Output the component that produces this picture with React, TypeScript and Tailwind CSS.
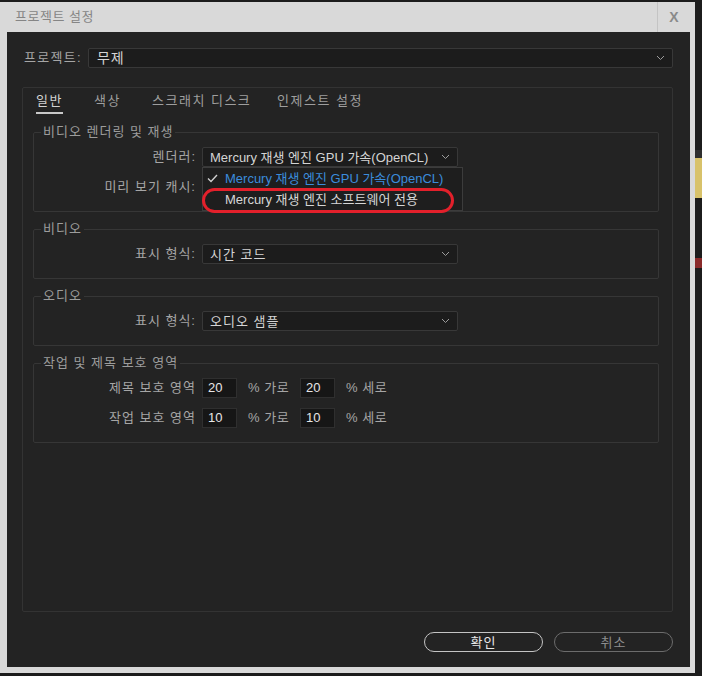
import React from "react";

const font = "font-['Liberation_Sans','Noto_Sans_CJK_KR',sans-serif]";

function Chevron() {
  return (
    <svg width="9" height="6" viewBox="0 0 9 6" className="shrink-0">
      <polyline points="1,1 4.5,4.5 8,1" fill="none" stroke="#9c9c9c" strokeWidth="1" />
    </svg>
  );
}

function Select({ value, ko, className = "" }: { value: string; ko?: boolean; className?: string }) {
  return (
    <div
      className={`flex items-center justify-between h-[20px] bg-[#1c1c1c] border border-[#383838] rounded-[2px] pl-[7px] pr-[7px] text-[13px] text-[#d4d4d4] ${className}`}
    >
      <span className={`leading-none whitespace-nowrap ${ko ? "tracking-[1px]" : ""}`}>{value}</span>
      <Chevron />
    </div>
  );
}

function Group({ title, first, children }: { title: string; first?: boolean; children: React.ReactNode }) {
  return (
    <fieldset
      className={`${first ? "mt-[9px]" : "mt-[8px]"} ml-[10px] mr-[13px] border border-[#363636] rounded-[2px] pb-[14px]`}
    >
      <legend className="ml-[7px] px-[2px] h-[18px] leading-[18px] text-[13px] tracking-[1px] text-[#9c9c9c]">{title}</legend>
      <div className="pt-[6px] flex flex-col gap-[10px]">{children}</div>
    </fieldset>
  );
}

function Row({ label, children }: { label: string; children: React.ReactNode }) {
  return (
    <div className="flex items-center h-[20px]">
      <div className="w-[162px] mr-[6px] text-right text-[13px] tracking-[1px] text-[#a6a6a6] whitespace-nowrap">{label}</div>
      {children}
    </div>
  );
}

function Num({ v }: { v: string }) {
  return (
    <div className="w-[35px] h-[20px] bg-[#161616] border border-[#2f2f2f] pl-[5px] flex items-center text-[13px] text-[#e6e6e6]">
      {v}
    </div>
  );
}

function SafeRow({ label, h, v }: { label: string; h: string; v: string }) {
  return (
    <Row label={label}>
      <Num v={h} />
      <span className="ml-[11px] mr-[12px] w-[40px] text-[13px] tracking-[0.5px] text-[#a6a6a6] whitespace-nowrap">% 가로</span>
      <Num v={v} />
      <span className="ml-[11px] text-[13px] tracking-[0.5px] text-[#a6a6a6] whitespace-nowrap">% 세로</span>
    </Row>
  );
}

const tabs = [
  { label: "일반", w: "w-[58px]" },
  { label: "색상", w: "w-[58px]" },
  { label: "스크래치 디스크", w: "w-[125px]" },
  { label: "인제스트 설정", w: "w-[100px]" },
];

export default function App() {
  return (
    <div className={`w-[702px] h-[676px] bg-[#1c1c1c] flex ${font} overflow-hidden`}>
      <div className="pt-[2px]">
        <div className="w-[695px] h-[671px] bg-[#d9d9d9] flex flex-col">
          {/* title bar */}
          <div className="h-[30px] flex items-center">
            <div className="flex-1 pl-[15px] text-[13px] tracking-[0.5px] text-[#858585]">프로젝트 설정</div>
            <div className="w-[33px] h-full border-l border-[#c4c4c4] mr-[5px] flex items-center justify-center text-[14px] font-bold text-[#8a8a8a]">
              X
            </div>
          </div>

          {/* body */}
          <div className="ml-[7px] mr-[5px] h-[635px] bg-[#232323] pl-[15px] pr-[17px] pt-[16px] flex flex-col">
            <div className="flex items-center pl-[2px] h-[19px]">
              <span className="text-[13px] tracking-[1.3px] text-[#a6a6a6] mr-[6px] whitespace-nowrap">프로젝트:</span>
              <Select value="무제" ko className="flex-1 h-[19px] pl-[8px] text-[14px]" />
            </div>

            <div className="mt-[20px] h-[525px] border border-[#333333] rounded-[2px] flex flex-col">
              <div className="flex pl-[13px] pt-[4px]">
                {tabs.map((t, i) => (
                  <div key={t.label} className={`${t.w} h-[22px] flex`}>
                    <span
                      className={`leading-[18px] text-[13px] tracking-[1.5px] whitespace-nowrap ${
                        i === 0 ? "text-[#d2d2d2] border-b-2 border-[#c8c8c8]" : "text-[#9e9e9e]"
                      }`}
                    >
                      {t.label}
                    </span>
                  </div>
                ))}
              </div>

              <Group title="비디오 렌더링 및 재생" first>
                <Row label="렌더러:">
                  <div className="relative">
                    <Select value="Mercury 재생 엔진 GPU 가속(OpenCL)" className="w-[256px]" />
                    <div className="absolute left-0 top-full w-[261px] bg-[#1e1e1e] border border-[#3c3c3c] z-10 text-[13px]">
                      <div className="h-[21px] flex items-center pl-[4px]">
                        <svg width="11" height="9" viewBox="0 0 11 9" className="mr-[7px]">
                          <polyline points="1,4.5 4,7.5 10,1" fill="none" stroke="#d0d0d0" strokeWidth="1.4" />
                        </svg>
                        <span className="text-[#3b8cdc] whitespace-nowrap">Mercury 재생 엔진 GPU 가속(OpenCL)</span>
                      </div>
                      <div className="h-[21px] flex items-center pl-[22px] text-[#d6d6d6] whitespace-nowrap">
                        Mercury 재생 엔진 소프트웨어 전용
                      </div>
                      <div className="absolute left-[-1px] top-[20px] w-[252px] h-[25px] border-[3px] border-[#e3202b] rounded-[14px]" />
                    </div>
                  </div>
                </Row>
                <Row label="미리 보기 캐시:">
                  <Select value="" className="w-[256px]" />
                </Row>
              </Group>

              <Group title="비디오">
                <Row label="표시 형식:">
                  <Select value="시간 코드" ko className="w-[256px]" />
                </Row>
              </Group>

              <Group title="오디오">
                <Row label="표시 형식:">
                  <Select value="오디오 샘플" ko className="w-[256px]" />
                </Row>
              </Group>

              <Group title="작업 및 제목 보호 영역">
                <SafeRow label="제목 보호 영역" h="20" v="20" />
                <SafeRow label="작업 보호 영역" h="10" v="10" />
              </Group>
            </div>

            <div className="mt-[20px] flex justify-end gap-[11px]">
              <button className="w-[119px] h-[20px] rounded-full border-[1.5px] border-[#c4c4c4] text-[13px] tracking-[1px] leading-none text-[#e8e8e8]">
                확인
              </button>
              <button className="w-[119px] h-[20px] rounded-full border-[1.5px] border-[#6c6c6c] text-[13px] tracking-[1px] leading-none text-[#8e8e8e]">
                취소
              </button>
            </div>
          </div>
        </div>
      </div>

      {/* desktop peeking at the right */}
      <div className="flex-1 flex flex-col pt-[150px]">
        <div className="h-[8px] bg-[#2e2e2e]" />
        <div className="h-[40px] bg-[#d8c26a]" />
        <div className="h-[60px] bg-[#1c1c1c]" />
        <div className="h-[10px] bg-[#8a2a2a]" />
      </div>
    </div>
  );
}
